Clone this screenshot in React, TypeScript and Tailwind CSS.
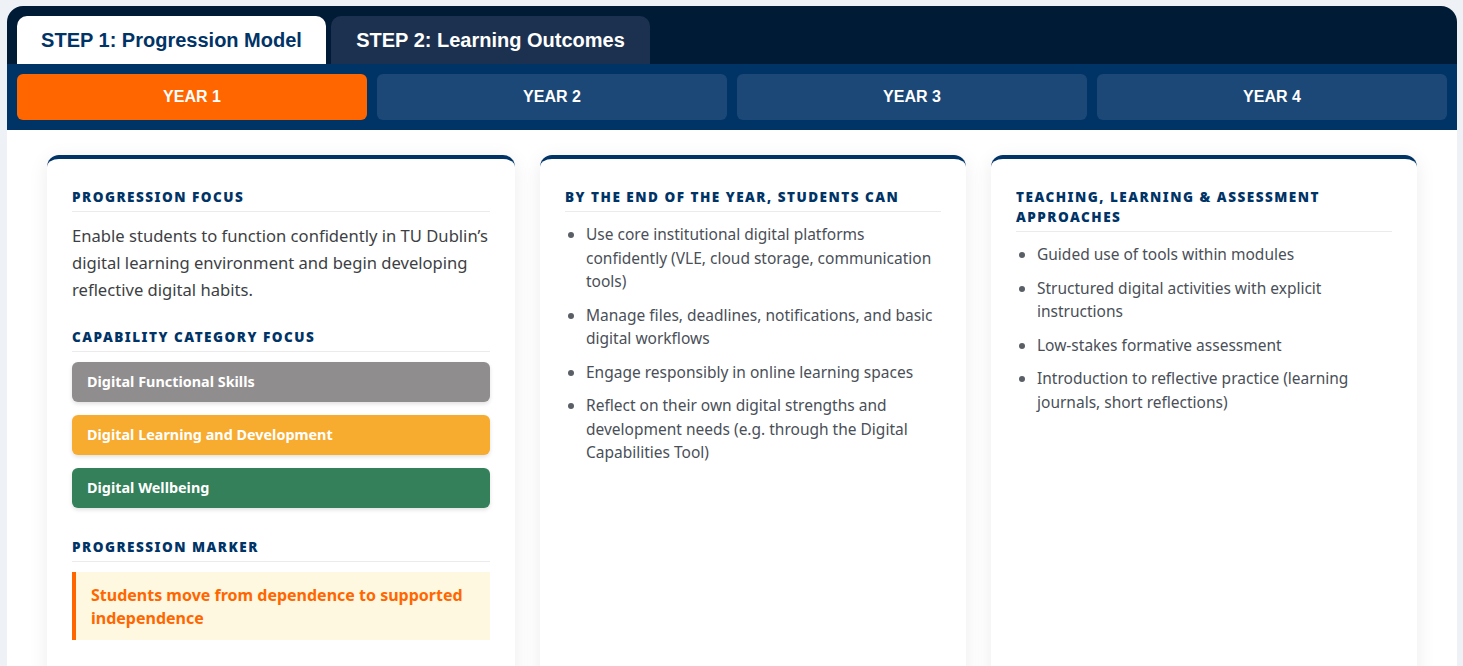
import React, { useState } from "react";

const years = ["YEAR 1", "YEAR 2", "YEAR 3", "YEAR 4"];

const categories = [
  { label: "Digital Functional Skills", color: "bg-[#8f8d8e]" },
  { label: "Digital Learning and Development", color: "bg-[#f7ab2f]" },
  { label: "Digital Wellbeing", color: "bg-[#33805a]" },
];

const outcomes = [
  "Use core institutional digital platforms confidently (VLE, cloud storage, communication tools)",
  "Manage files, deadlines, notifications, and basic digital workflows",
  "Engage responsibly in online learning spaces",
  "Reflect on their own digital strengths and development needs (e.g. through the Digital Capabilities Tool)",
];

const approaches = [
  "Guided use of tools within modules",
  "Structured digital activities with explicit instructions",
  "Low-stakes formative assessment",
  "Introduction to reflective practice (learning journals, short reflections)",
];

const Heading = ({ children }: { children: React.ReactNode }) => (
  <h3 className="text-[13.5px] leading-[20px] font-black uppercase tracking-[1.5px] text-[#003366] pb-[4px] border-b border-[#ebebeb] mb-[10px]">
    {children}
  </h3>
);

const BulletList = ({ items }: { items: string[] }) => (
  <ul className="list-disc pl-[21px] pt-[1px] text-[15.5px] leading-[23.5px] text-[#4a4f58] marker:text-[#5a5f66]">
    {items.map((item) => (
      <li key={item} className="mb-[10px]">
        {item}
      </li>
    ))}
  </ul>
);

export default function App() {
  const [step, setStep] = useState(1);
  const [year, setYear] = useState(0);

  return (
    <div className="min-h-screen bg-[#eef1f6] pt-[6px] pl-[7px] pr-[6px]" style={{ fontFamily: '"Noto Sans", sans-serif' }}>
      <div className="rounded-t-[16px] overflow-hidden bg-white">
        {/* Step tabs */}
        <div className="bg-[#001b36] pt-[10px] px-[10px] flex gap-[5px]" style={{ fontFamily: '"Liberation Sans", Arial, sans-serif' }}>
          <button
            onClick={() => setStep(1)}
            className={`h-[48px] w-[309px] rounded-t-[10px] text-[20px] font-bold ${
              step === 1 ? "bg-white text-[#003366]" : "bg-[#1c314f] text-white"
            }`}
          >
            STEP 1: Progression Model
          </button>
          <button
            onClick={() => setStep(2)}
            className={`h-[48px] w-[319px] rounded-t-[10px] text-[20px] font-bold ${
              step === 2 ? "bg-white text-[#003366]" : "bg-[#1c314f] text-white"
            }`}
          >
            STEP 2: Learning Outcomes
          </button>
        </div>

        {/* Year selector */}
        <div className="bg-[#003366] p-[10px] grid grid-cols-4 gap-[10px]" style={{ fontFamily: '"Liberation Sans", Arial, sans-serif' }}>
          {years.map((y, i) => (
            <button
              key={y}
              onClick={() => setYear(i)}
              className={`h-[46px] rounded-[6px] text-white text-[16px] font-bold ${
                year === i ? "bg-[#ff6600]" : "bg-[#1c4877]"
              }`}
            >
              {y}
            </button>
          ))}
        </div>

        {/* Content */}
        <div className="px-[40px] pt-[25px] pb-[30px] grid grid-cols-[468px_1fr_1fr] gap-[25px] bg-white">
          <div className="bg-white rounded-[12px] border-t-[4px] border-[#003366] shadow-[0_4px_20px_rgba(0,0,0,0.08)] px-[25px] pt-[28px] pb-[25px]">
            <Heading>Progression Focus</Heading>
            <p className="text-[16.6px] leading-[27px] text-[#3d3f44]">
              Enable students to function confidently in TU Dublin’s digital learning environment and begin developing reflective digital habits.
            </p>

            <div className="mt-[24px]">
              <Heading>Capability Category Focus</Heading>
              <div className="flex flex-col gap-[13px]">
                {categories.map((c) => (
                  <div
                    key={c.label}
                    className={`${c.color} h-[40px] rounded-[6px] px-[15px] flex items-center text-white text-[14.4px] font-bold shadow-[0_2px_4px_rgba(0,0,0,0.12)]`}
                  >
                    {c.label}
                  </div>
                ))}
              </div>
            </div>

            <div className="mt-[29px]">
              <Heading>Progression Marker</Heading>
              <div className="bg-[#fff8e1] border-l-[4px] border-[#ff6600] px-[15px] pt-[12px] pb-[10px] text-[#ff6600] text-[16px] leading-[23px] font-bold mt-[10px]">
                Students move from dependence to supported independence
              </div>
            </div>
          </div>

          <div className="bg-white rounded-[12px] border-t-[4px] border-[#003366] shadow-[0_4px_20px_rgba(0,0,0,0.08)] px-[25px] pt-[28px] pb-[25px] min-h-[560px]">
            <Heading>By the end of the year, students can</Heading>
            <BulletList items={outcomes} />
          </div>

          <div className="bg-white rounded-[12px] border-t-[4px] border-[#003366] shadow-[0_4px_20px_rgba(0,0,0,0.08)] px-[25px] pt-[28px] pb-[25px] min-h-[560px]">
            <Heading>Teaching, Learning &amp; Assessment Approaches</Heading>
            <BulletList items={approaches} />
          </div>
        </div>
      </div>
    </div>
  );
}
